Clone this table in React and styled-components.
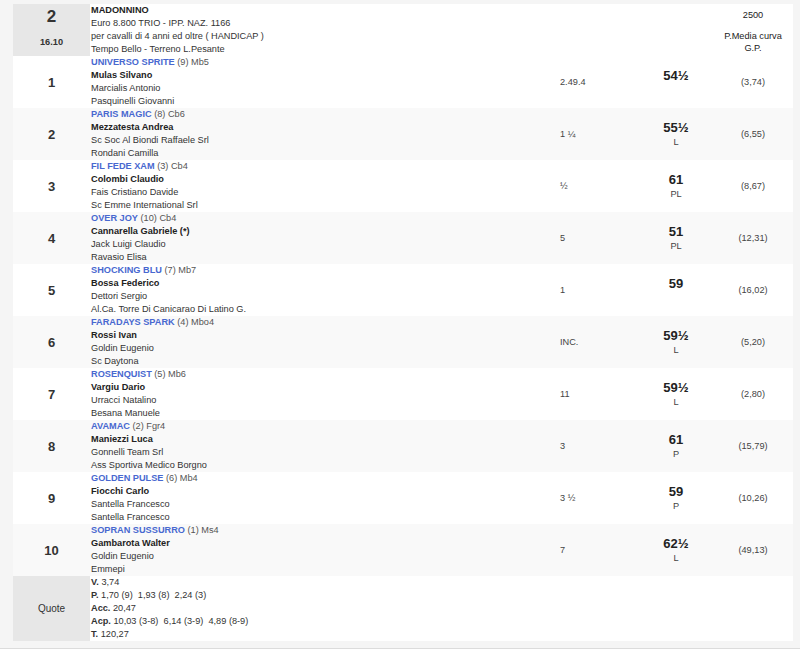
import React from "react";
import styled, { createGlobalStyle } from "styled-components";

const Global = createGlobalStyle`
  html, body { margin: 0; padding: 0; background: #fff; }
  body { font-family: "Liberation Sans", Arial, sans-serif; color: #333; }
`;

const Wrap = styled.div`
  width: 780px;
  padding: 4px 7px 7px 13px;
  background: #f5f5f5;
  border-bottom: 1px solid #dcdcdc;
`;

const Table = styled.div`
  display: flex;
  flex-direction: column;
  background: #fff;
`;

const Row = styled.div`
  display: grid;
  grid-template-columns: 77px 467px 82px 74px 80px;
  height: ${(p) => p.$h || 52}px;
  background: ${(p) => (p.$alt ? "#f9f9f9" : "#fff")};
`;

const GrayCell = styled.div`
  background: #e7e7e7;
  display: flex;
  flex-direction: column;
  align-items: center;
  justify-content: ${(p) => (p.$top ? "flex-start" : "center")};
  padding-top: ${(p) => (p.$top ? 3 : 0)}px;
  color: #333;
`;

const PosCell = styled.div`
  display: flex;
  align-items: center;
  justify-content: center;
  font-size: 13px;
  font-weight: bold;
  color: #333;
`;

const BigNum = styled.div`
  font-size: 17px;
  font-weight: bold;
  line-height: 20px;
`;

const Hour = styled.div`
  font-size: 9.2px;
  font-weight: bold;
  line-height: 13px;
  margin-top: 8.5px;
`;

const QuoteLabel = styled.div`
  font-size: 10px;
  line-height: 13px;
`;

const Desc = styled.div`
  display: flex;
  flex-direction: column;
  padding-left: 1px;
  font-size: 9.2px;
  line-height: 13px;
  color: #333;
`;

const Line = styled.div`
  white-space: nowrap;
  font-weight: ${(p) => (p.$bold ? "bold" : "normal")};
  color: ${(p) => (p.$dark ? "#222" : "#333")};
`;

const Horse = styled.span`
  color: #4868d0;
  font-weight: bold;
`;

const Extra = styled.span`
  color: #555;
`;

const TimeCell = styled.div`
  display: flex;
  align-items: center;
  padding-left: 3px;
  font-size: 9.2px;
  color: #444;
`;

const WeightCell = styled.div`
  display: flex;
  flex-direction: column;
  align-items: center;
  justify-content: center;
`;

const Weight = styled.div`
  font-size: 13px;
  font-weight: bold;
  line-height: 16px;
  color: #222;
`;

const WeightSub = styled.div`
  font-size: 9.2px;
  line-height: 13px;
  min-height: 13px;
  color: #444;
`;

const OddsCell = styled.div`
  display: flex;
  flex-direction: column;
  align-items: center;
  justify-content: ${(p) => (p.$top ? "flex-start" : "center")};
  padding-top: ${(p) => (p.$top ? 5 : 0)}px;
  font-size: 9.2px;
  color: #444;
  text-align: center;
`;

const OddsTop = styled.div`
  line-height: 13px;
  color: #222;
`;

const OddsLabel = styled.div`
  margin-top: 8px;
  line-height: 12px;
  color: #222;
`;

const Empty = styled.div``;

const runners = [
  ["1", "UNIVERSO SPRITE", "(9) Mb5", "Mulas Silvano", "Marcialis Antonio", "Pasquinelli Giovanni", "2.49.4", "54½", "", "(3,74)"],
  ["2", "PARIS MAGIC", "(8) Cb6", "Mezzatesta Andrea", "Sc Soc Al Biondi Raffaele Srl", "Rondani Camilla", "1 ¼", "55½", "L", "(6,55)"],
  ["3", "FIL FEDE XAM", "(3) Cb4", "Colombi Claudio", "Fais Cristiano Davide", "Sc Emme International Srl", "½", "61", "PL", "(8,67)"],
  ["4", "OVER JOY", "(10) Cb4", "Cannarella Gabriele (*)", "Jack Luigi Claudio", "Ravasio Elisa", "5", "51", "PL", "(12,31)"],
  ["5", "SHOCKING BLU", "(7) Mb7", "Bossa Federico", "Dettori Sergio", "Al.Ca. Torre Di Canicarao Di Latino G.", "1", "59", "", "(16,02)"],
  ["6", "FARADAYS SPARK", "(4) Mbo4", "Rossi Ivan", "Goldin Eugenio", "Sc Daytona", "INC.", "59½", "L", "(5,20)"],
  ["7", "ROSENQUIST", "(5) Mb6", "Vargiu Dario", "Urracci Natalino", "Besana Manuele", "11", "59½", "L", "(2,80)"],
  ["8", "AVAMAC", "(2) Fgr4", "Maniezzi Luca", "Gonnelli Team Srl", "Ass Sportiva Medico Borgno", "3", "61", "P", "(15,79)"],
  ["9", "GOLDEN PULSE", "(6) Mb4", "Fiocchi Carlo", "Santella Francesco", "Santella Francesco", "3 ½", "59", "P", "(10,26)"],
  ["10", "SOPRAN SUSSURRO", "(1) Ms4", "Gambarota Walter", "Goldin Eugenio", "Emmepi", "7", "62½", "L", "(49,13)"],
];

const quotes = [
  ["V.", " 3,74"],
  ["P.", " 1,70 (9)\u00a0 1,93 (8)\u00a0 2,24 (3)"],
  ["Acc.", " 20,47"],
  ["Acp.", " 10,03 (3-8)\u00a0 6,14 (3-9)\u00a0 4,89 (8-9)"],
  ["T.", " 120,27"],
];

export default function App() {
  return (
    <>
      <Global />
      <Wrap>
        <Table>
          <Row>
            <GrayCell $top>
              <BigNum>2</BigNum>
              <Hour>16.10</Hour>
            </GrayCell>
            <Desc>
              <Line $bold $dark>MADONNINO</Line>
              <Line>Euro 8.800 TRIO - IPP. NAZ. 1166</Line>
              <Line>per cavalli di 4 anni ed oltre ( HANDICAP )</Line>
              <Line>Tempo Bello - Terreno L.Pesante</Line>
            </Desc>
            <Empty />
            <Empty />
            <OddsCell $top>
              <OddsTop>2500</OddsTop>
              <OddsLabel>P.Media curva<br />G.P.</OddsLabel>
            </OddsCell>
          </Row>
          {runners.map((r, i) => (
            <Row key={r[0]} $alt={i % 2 === 1}>
              <PosCell>{r[0]}</PosCell>
              <Desc>
                <Line>
                  <Horse>{r[1]}</Horse> <Extra>{r[2]}</Extra>
                </Line>
                <Line $bold $dark>{r[3]}</Line>
                <Line>{r[4]}</Line>
                <Line>{r[5]}</Line>
              </Desc>
              <TimeCell>{r[6]}</TimeCell>
              <WeightCell>
                <Weight>{r[7]}</Weight>
                <WeightSub>{r[8]}</WeightSub>
              </WeightCell>
              <OddsCell>{r[9]}</OddsCell>
            </Row>
          ))}
          <Row $h={65}>
            <GrayCell>
              <QuoteLabel>Quote</QuoteLabel>
            </GrayCell>
            <Desc>
              {quotes.map(([k, v]) => (
                <Line key={k}>
                  <b>{k}</b>
                  {v}
                </Line>
              ))}
            </Desc>
            <Empty />
            <Empty />
            <Empty />
          </Row>
        </Table>
      </Wrap>
    </>
  );
}
